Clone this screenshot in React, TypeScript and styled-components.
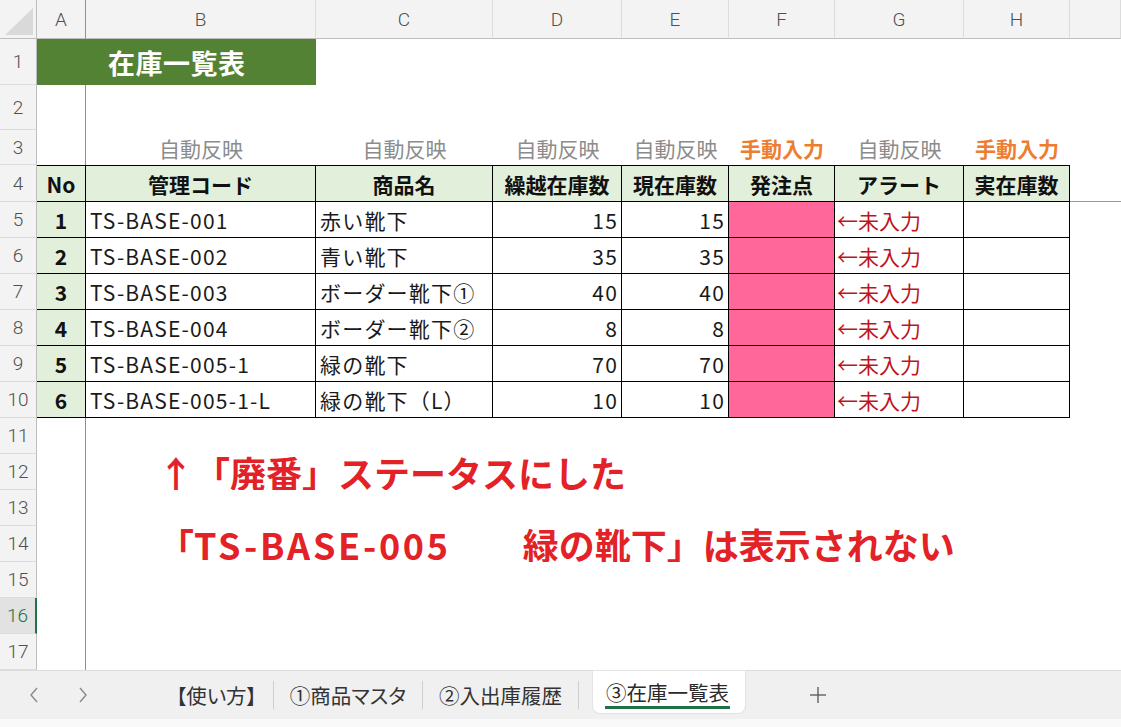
import React from "react";
import styled, { createGlobalStyle, css } from "styled-components";

const GlobalStyle = createGlobalStyle`
  html, body { margin: 0; padding: 0; background: #fff; }
  body {
    font-family: "Noto Sans CJK JP", "Noto Sans", sans-serif;
    overflow: hidden;
  }
  #root { width: 1121px; height: 727px; }
`;

const Window = styled.div`
  width: 1121px;
  height: 727px;
  display: flex;
  flex-direction: column;
  overflow: hidden;
  background: #fff;
`;

const Sheet = styled.div`
  flex: none;
  height: 670px;
  display: grid;
  grid-template-columns: 37px 49px 230px 177px 129px 107px 106px 129px 106px 1fr;
  grid-template-rows: 39px 46px 45px 35px 37px repeat(13, 36px);
  overflow: hidden;
`;

const cellBase = css`
  box-sizing: border-box;
  min-width: 0;
  display: flex;
  align-items: center;
  white-space: nowrap;
  overflow: hidden;
`;

const headerFont = css`
  font-family: Roboto, "Noto Sans", sans-serif;
  font-weight: 300;
  font-size: 19px;
  color: #505050;
`;

const Corner = styled.div`
  ${cellBase};
  position: relative;
  background: #f3f3f3;
  border-right: 1px solid #bdbdbd;
  border-bottom: 1px solid #bdbdbd;
  &::after {
    content: "";
    position: absolute;
    right: 3px;
    bottom: 3px;
    width: 28px;
    height: 27px;
    background: #d9d9d9;
    clip-path: polygon(100% 0, 100% 100%, 0 100%);
  }
`;

const ColHeader = styled.div<{ $frozen?: boolean }>`
  ${cellBase};
  ${headerFont};
  justify-content: center;
  background: #f3f3f3;
  border-bottom: 1px solid #bdbdbd;
  border-right: 1px solid ${(p) => (p.$frozen ? "#8f8f8f" : "#dcdcdc")};
`;

const RowHeader = styled.div<{ $active?: boolean }>`
  ${cellBase};
  ${headerFont};
  justify-content: center;
  background: ${(p) => (p.$active ? "#e2e2e2" : "#f3f3f3")};
  color: ${(p) => (p.$active ? "#217346" : "#505050")};
  border-bottom: 1px solid #dcdcdc;
  border-right: ${(p) => (p.$active ? "2px solid #217346" : "1px solid #bdbdbd")};
`;

const Blank = styled.div<{ $frozen?: boolean; $paneBottom?: boolean }>`
  ${cellBase};
  background: #fff;
  border-right: ${(p) => (p.$frozen ? "1px solid #8f8f8f" : "none")};
  border-bottom: ${(p) => (p.$paneBottom ? "1px solid #9a9a9a" : "none")};
`;

const TitleCell = styled.div`
  ${cellBase};
  grid-column: 2 / 4;
  background: #548235;
  color: #fff;
  font-weight: 700;
  font-size: 27px;
  padding-left: 71px;
  letter-spacing: 0.5px;
`;

const NoteLabel = styled.div<{ $manual?: boolean }>`
  ${cellBase};
  justify-content: center;
  font-size: 21px;
  overflow: visible;
  font-weight: ${(p) => (p.$manual ? 700 : 400)};
  color: ${(p) => (p.$manual ? "#ED7D31" : "#8c8c8c")};
`;

const tableBorder = css`
  border-right: 1px solid #000;
  border-bottom: 1px solid #000;
`;

const HeadCell = styled.div`
  ${cellBase};
  ${tableBorder};
  border-top: 1px solid #000;
  justify-content: center;
  background: #e2efda;
  font-size: 21px;
  font-weight: 700;
  color: #111;
`;

const NoCell = styled.div`
  ${cellBase};
  ${tableBorder};
  justify-content: center;
  background: #e2efda;
  font-size: 21px;
  font-weight: 700;
  color: #111;
`;

const TextCell = styled.div<{ $align?: "left" | "right" }>`
  ${cellBase};
  ${tableBorder};
  justify-content: ${(p) => (p.$align === "right" ? "flex-end" : "flex-start")};
  padding: 0 3px 0 4px;
  font-size: 21px;
  letter-spacing: 1.2px;
  color: #1a1a1a;
`;

const PinkCell = styled.div`
  ${cellBase};
  ${tableBorder};
  background: #ff6699;
`;

const AlertCell = styled.div`
  ${cellBase};
  ${tableBorder};
  padding-left: 2px;
  font-size: 21px;
  color: #c0141c;
`;

const EmptyCell = styled.div`
  ${cellBase};
  ${tableBorder};
  background: #fff;
`;

const Annotation = styled.div`
  ${cellBase};
  grid-column: 3 / -1;
  overflow: visible;
  padding-left: 72px;
  font-size: 36px;
  font-weight: 700;
  color: #e32227;
  line-height: 36px;
`;

const Latin = styled.span`
  letter-spacing: 2.7px;
`;

const TabBar = styled.div`
  flex: none;
  height: 49px;
  box-sizing: border-box;
  display: flex;
  align-items: stretch;
  background: #f0f0f0;
  border-top: 1px solid #dcdcdc;
`;

const Nav = styled.div`
  width: 160px;
  flex: none;
  box-sizing: border-box;
  display: flex;
  align-items: center;
  padding-left: 28px;
  gap: 37px;
  color: #8a8a8a;
`;

const Tab = styled.div<{ $active?: boolean }>`
  position: relative;
  display: flex;
  align-items: center;
  padding: ${(p) => (p.$active ? "0 16px 0 13px" : "0 16px")};
  margin-left: ${(p) => (p.$active ? "14px" : "0")};
  font-size: 20.5px;
  font-feature-settings: "palt";
  color: ${(p) => (p.$active ? "#2a2a2a" : "#333")};
  background: ${(p) => (p.$active ? "#fff" : "transparent")};
  margin-bottom: ${(p) => (p.$active ? "6px" : "0")};
  border-radius: ${(p) => (p.$active ? "0 0 7px 7px" : "0")};
  box-shadow: ${(p) => (p.$active ? "0 0 0 1px #e3e3e3" : "none")};
`;

const Underline = styled.span`
  position: absolute;
  left: 12px;
  right: 15px;
  bottom: 4px;
  height: 3px;
  background: #217346;
`;

const Sep = styled.div`
  width: 1px;
  height: 28px;
  align-self: center;
  background: #cfcfcf;
`;

const AddTab = styled.div`
  display: flex;
  align-items: center;
  margin-left: 63px;
  color: #555;
`;

const StatusStrip = styled.div`
  flex: 1;
  background: #f9f9f9;
`;

type Item = { no: number; code: string; name: string; carry: number; cur: number };
const items: Item[] = [
  { no: 1, code: "TS-BASE-001", name: "赤い靴下", carry: 15, cur: 15 },
  { no: 2, code: "TS-BASE-002", name: "青い靴下", carry: 35, cur: 35 },
  { no: 3, code: "TS-BASE-003", name: "ボーダー靴下①", carry: 40, cur: 40 },
  { no: 4, code: "TS-BASE-004", name: "ボーダー靴下②", carry: 8, cur: 8 },
  { no: 5, code: "TS-BASE-005-1", name: "緑の靴下", carry: 70, cur: 70 },
  { no: 6, code: "TS-BASE-005-1-L", name: "緑の靴下（L）", carry: 10, cur: 10 },
];

const letters = ["A", "B", "C", "D", "E", "F", "G", "H"];
const notes: { text: string; manual?: boolean }[] = [
  { text: "自動反映" },
  { text: "自動反映" },
  { text: "自動反映" },
  { text: "自動反映" },
  { text: "手動入力", manual: true },
  { text: "自動反映" },
  { text: "手動入力", manual: true },
];
const heads = ["No", "管理コード", "商品名", "繰越在庫数", "現在庫数", "発注点", "アラート", "実在庫数"];

const notesRows: Record<number, React.ReactNode> = {
  12: "↑「廃番」ステータスにした",
  14: (
    <>
      「<Latin>TS-BASE-005</Latin>　　緑の靴下」は表示されない
    </>
  ),
};

const Chevron = ({ dir }: { dir: "l" | "r" }) => (
  <svg width="12" height="18" viewBox="0 0 12 18" fill="none" stroke="currentColor" strokeWidth="1.4">
    {dir === "l" ? <polyline points="9,2 3,9 9,16" /> : <polyline points="3,2 9,9 3,16" />}
  </svg>
);

const Plus = () => (
  <svg width="18" height="18" viewBox="0 0 18 18" stroke="currentColor" strokeWidth="1.3">
    <line x1="9" y1="1" x2="9" y2="17" />
    <line x1="1" y1="9" x2="17" y2="9" />
  </svg>
);

const blanks = (n: number, prefix: string) =>
  Array.from({ length: n }, (_, i) => <Blank key={`${prefix}-${i}`} />);

export default function App() {
  return (
    <>
      <GlobalStyle />
      <Window>
        <Sheet>
          <Corner />
          {letters.map((l) => (
            <ColHeader key={l} $frozen={l === "A"}>
              {l}
            </ColHeader>
          ))}
          <ColHeader />

          <RowHeader>1</RowHeader>
          <TitleCell>在庫一覧表</TitleCell>
          {blanks(7, "r1")}

          <RowHeader>2</RowHeader>
          <Blank $frozen />
          {blanks(8, "r2")}

          <RowHeader>3</RowHeader>
          <Blank $frozen />
          {notes.map((n, i) => (
            <NoteLabel key={i} $manual={n.manual}>
              {n.text}
            </NoteLabel>
          ))}
          <Blank />

          <RowHeader>4</RowHeader>
          {heads.map((h) => (
            <HeadCell key={h}>{h}</HeadCell>
          ))}
          <Blank $paneBottom />

          {items.map((it, i) => (
            <React.Fragment key={it.no}>
              <RowHeader>{i + 5}</RowHeader>
              <NoCell>{it.no}</NoCell>
              <TextCell>{it.code}</TextCell>
              <TextCell>{it.name}</TextCell>
              <TextCell $align="right">{it.carry}</TextCell>
              <TextCell $align="right">{it.cur}</TextCell>
              <PinkCell />
              <AlertCell>←未入力</AlertCell>
              <EmptyCell />
              <Blank />
            </React.Fragment>
          ))}

          {[11, 12, 13, 14, 15, 16, 17].map((r) => (
            <React.Fragment key={r}>
              <RowHeader $active={r === 16}>{r}</RowHeader>
              <Blank $frozen />
              {notesRows[r] ? <Annotation>{notesRows[r]}</Annotation> : blanks(8, `r${r}`)}
            </React.Fragment>
          ))}
        </Sheet>

        <TabBar>
          <Nav>
            <Chevron dir="l" />
            <Chevron dir="r" />
          </Nav>
          <Tab>【使い方】</Tab>
          <Sep />
          <Tab>①商品マスタ</Tab>
          <Sep />
          <Tab>②入出庫履歴</Tab>
          <Sep />
          <Tab $active>
            ③在庫一覧表
            <Underline />
          </Tab>
          <Sep />
          <AddTab>
            <Plus />
          </AddTab>
        </TabBar>
        <StatusStrip />
      </Window>
    </>
  );
}
